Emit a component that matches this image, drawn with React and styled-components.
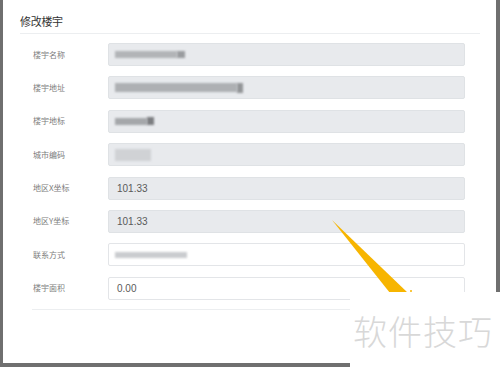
import React from "react";
import styled, { createGlobalStyle } from "styled-components";

const GlobalStyle = createGlobalStyle`
  html, body {
    margin: 0;
    padding: 0;
    background: #6f6f6f;
  }
  * {
    box-sizing: border-box;
  }
`;

const CJK = `"Noto Sans CJK SC", "Noto Sans", sans-serif`;

// ─── Page / Modal ────────────────────────────────────────────────────────────

const Backdrop = styled.div`
  position: relative;
  width: 500px;
  height: 367px;
  padding: 0 4px 4px 3px;
  background: #6f6f6f;
  overflow: hidden;
`;

const Modal = styled.div`
  width: 100%;
  height: 100%;
  background: #ffffff;
  display: flex;
  flex-direction: column;
  font-family: ${CJK};
`;

const Header = styled.div`
  margin: 0 16px 0 17px;
  height: 34px;
  padding-top: 14px;
  border-bottom: 1px solid #eceef0;
`;

const Title = styled.h3`
  margin: 0;
  font-size: 11px;
  font-weight: 400;
  line-height: 14px;
  color: #333333;
  letter-spacing: -0.3px;
`;

const Form = styled.div`
  display: flex;
  flex-direction: column;
  gap: 10.4px;
  padding: 9px 0 0 30px;
`;

const Row = styled.div`
  display: flex;
  align-items: center;
  height: 23px;
`;

const Label = styled.label`
  width: 75px;
  font-size: 8px;
  line-height: 10px;
  color: #7d7d7d;
  white-space: nowrap;
`;

const Field = styled.div`
  width: 357px;
  height: 23px;
  display: flex;
  align-items: center;
  padding-left: ${({ $pad }) => $pad || 8}px;
  border-radius: 2px;
  border: 1px solid ${({ $disabled }) => ($disabled ? "#dfe2e5" : "#e3e5e8")};
  background: ${({ $disabled }) => ($disabled ? "#e8eaed" : "#ffffff")};
  font-family: "Liberation Sans", Arial, sans-serif;
  font-size: 10px;
  color: #5a5a5a;
`;

const Redacted = styled.span`
  display: block;
  height: ${({ $h }) => $h || 7}px;
  width: ${({ $w }) => $w}px;
  background: ${({ $tone }) => $tone};
  filter: blur(1.3px);
`;

const Footer = styled.div`
  margin: 9px 16px 0 29px;
  border-top: 1px solid #eceef0;
`;

// ─── Overlays ────────────────────────────────────────────────────────────────

const Arrow = styled.svg`
  position: absolute;
  left: 0;
  top: 0;
  pointer-events: none;
`;

const Watermark = styled.div`
  position: absolute;
  left: 350px;
  top: 292px;
  width: 150px;
  height: 75px;
  background: #ffffff;
  display: flex;
  align-items: center;
  padding: 2px 0 0 3px;
  font-family: ${CJK};
  font-size: 34px;
  font-weight: 300;
  letter-spacing: 1px;
  color: #d8d8d8;
  white-space: nowrap;
`;

const rows = [
  { label: "楼宇名称", disabled: true, blur: [{ w: 62, tone: "#b2b4b7" }, { w: 8, tone: "#9a9c9f" }] },
  { label: "楼宇地址", disabled: true, blur: [{ w: 122, tone: "#aeb0b3", h: 9 }, { w: 6, tone: "#939598", h: 10 }] },
  { label: "楼宇地标", disabled: true, blur: [{ w: 32, tone: "#a5a7aa" }, { w: 7, tone: "#7c7e81", h: 8 }] },
  { label: "城市编码", disabled: true, blur: [{ w: 36, tone: "#d0d2d5", h: 12 }] },
  { label: "地区X坐标", disabled: true, value: "101.33" },
  { label: "地区Y坐标", disabled: true, value: "101.33" },
  { label: "联系方式", blur: [{ w: 72, tone: "#cacccf", h: 6 }] },
  { label: "楼宇面积", value: "0.00" },
];

const App = () => {
  return (
    <>
      <GlobalStyle />
      <Backdrop>
        <Modal>
          <Header>
            <Title>修改楼宇</Title>
          </Header>
          <Form>
            {rows.map((row) => (
              <Row key={row.label}>
                <Label>{row.label}</Label>
                <Field $disabled={row.disabled} $pad={row.value ? 8 : 6}>
                  {row.value}
                  {row.blur &&
                    row.blur.map((b, i) => (
                      <Redacted key={i} $w={b.w} $tone={b.tone} $h={b.h} />
                    ))}
                </Field>
              </Row>
            ))}
          </Form>
          <Footer />
        </Modal>
        <Arrow width="500" height="367" viewBox="0 0 500 367">
          <polygon points="332,220 408,293 390,293" fill="#f7b500" />
          <circle cx="411" cy="291" r="1" fill="#f7b500" />
        </Arrow>
        <Watermark>软件技巧</Watermark>
      </Backdrop>
    </>
  );
};

export default App;
